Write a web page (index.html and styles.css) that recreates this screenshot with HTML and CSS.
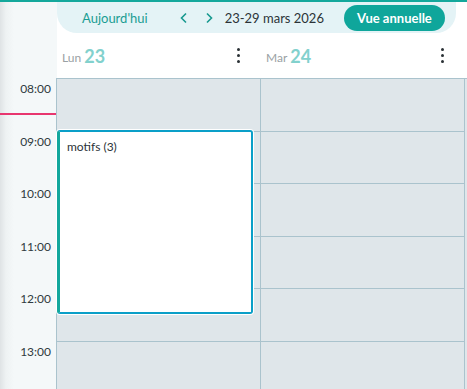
FILE: index.html
```html
<!DOCTYPE html>
<html lang="fr">
<head>
  <meta charset="UTF-8" />
  <meta name="viewport" content="width=device-width, initial-scale=1" />
  <title>Agenda</title>
  <link rel="stylesheet" href="styles.css">
</head>
<body>
  <div class="page">
    <div class="gutter">
      <div class="gutter-head"></div>
      <div class="hours">
        <div class="hour">08:00</div>
        <div class="hour">09:00</div>
        <div class="hour">10:00</div>
        <div class="hour">11:00</div>
        <div class="hour">12:00</div>
        <div class="hour">13:00</div>
        <div class="now-line"></div>
      </div>
    </div>

    <div class="main">
      <div class="toolbar">
        <button class="today">Aujourd'hui</button>
        <div class="arrows">
          <svg width="10" height="12" viewBox="0 0 10 12"><path d="M7 1.5 L2.5 6 L7 10.5" fill="none" stroke="#17998f" stroke-width="1.6"/></svg>
          <svg width="10" height="12" viewBox="0 0 10 12"><path d="M3 1.5 L7.5 6 L3 10.5" fill="none" stroke="#17998f" stroke-width="1.6"/></svg>
        </div>
        <span class="range">23-29 mars 2026</span>
        <button class="year">Vue annuelle</button>
      </div>

      <div class="days">
        <div class="day-head">
          <span class="dname">Lun</span><span class="dnum">23</span>
          <span class="kebab"><i></i><i></i><i></i></span>
        </div>
        <div class="day-head">
          <span class="dname">Mar</span><span class="dnum">24</span>
          <span class="kebab"><i></i><i></i><i></i></span>
        </div>
      </div>

      <div class="grid">
        <div class="col">
          <div class="slot"></div><div class="slot"></div><div class="slot"></div>
          <div class="slot"></div><div class="slot"></div><div class="slot"></div>
          <div class="event">motifs (3)</div>
        </div>
        <div class="col">
          <div class="slot"></div><div class="slot"></div><div class="slot"></div>
          <div class="slot"></div><div class="slot"></div><div class="slot"></div>
        </div>
      </div>
    </div>
  </div>
</body>
</html>
```

FILE: styles.css
```css
html, body {
  margin: 0;
  height: 100%;
  overflow: hidden;
}
body {
  font-family: Lato, "Noto Sans", sans-serif;
  color: #2b3338;
  border-top: 2px solid #14a89c;
  box-sizing: border-box;
  background: #fff;
}
.page {
  display: flex;
  height: 100%;
}
.gutter {
  width: 57px;
  flex: none;
  background: linear-gradient(to right, #dfe3e5 0, #eef2f3 6px, #f4f8f9 14px);
}
.gutter-head {
  height: 76px;
  width: 56px;
}
.hours {
  position: relative;
  border-right: 1px solid #aac3cd;
}
.hour {
  height: 52.6px;
  box-sizing: border-box;
  padding: 3px 5px 0 0;
  text-align: right;
  font-size: 12px;
  color: #2f3a40;
}
.now-line {
  position: absolute;
  left: 0;
  right: 0;
  top: 35px;
  height: 2px;
  background: #e8366f;
}
.main {
  flex: 1;
  display: flex;
  flex-direction: column;
  min-height: 0;
  background: #fff;
}
.toolbar {
  flex: none;
  height: 31px;
  margin-right: 11px;
  background: #e4f3f6;
  border-radius: 0 0 20px 20px;
  display: flex;
  align-items: center;
  padding-left: 25px;
}
.today {
  border: none;
  background: none;
  padding: 0;
  font: inherit;
  font-size: 13px;
  color: #1a9d93;
}
.arrows {
  display: flex;
  gap: 15px;
  margin-left: 31px;
}
.range {
  margin-left: 11px;
  font-size: 13px;
  color: #2b3338;
}
.year {
  margin-left: 20px;
  height: 26px;
  width: 101px;
  border: none;
  border-radius: 13px;
  background: #0fa69b;
  color: #fff;
  font: inherit;
  font-size: 13px;
  font-weight: bold;
}
.days {
  flex: none;
  display: flex;
  height: 45px;
}
.day-head {
  width: 204px;
  display: flex;
  align-items: center;
  padding-left: 5px;
  box-sizing: border-box;
}
.dname {
  font-size: 12px;
  color: #9aa1a4;
  margin-right: 3px;
  margin-top: 3px;
}
.dnum {
  font-size: 18px;
  font-weight: bold;
  color: #82d1cd;
}
.kebab {
  margin-left: auto;
  margin-right: 21px;
  display: flex;
  flex-direction: column;
  gap: 3px;
}
.kebab i {
  width: 3px;
  height: 3px;
  border-radius: 50%;
  background: #2a3135;
}
.grid {
  display: flex;
  background: #dfe6ea;
  flex: 1;
  min-height: 0;
  border-top: 1px solid #aac3cd;
}
.col {
  position: relative;
  width: 203px;
  border-right: 1px solid #aac3cd;
}
.slot {
  height: 52.6px;
  box-sizing: border-box;
  border-bottom: 1px solid #aac3cd;
}
.event {
  position: absolute;
  top: 51px;
  left: 0;
  width: 196px;
  height: 184px;
  box-sizing: border-box;
  background: #fff;
  border: 2px solid #0a9fc8;
  border-left: 3px solid #13a79d;
  border-radius: 3px;
  box-shadow: 0 0 0 1px #fff;
  padding: 7px 7px;
  font-size: 12px;
  color: #2b3338;
}
```
